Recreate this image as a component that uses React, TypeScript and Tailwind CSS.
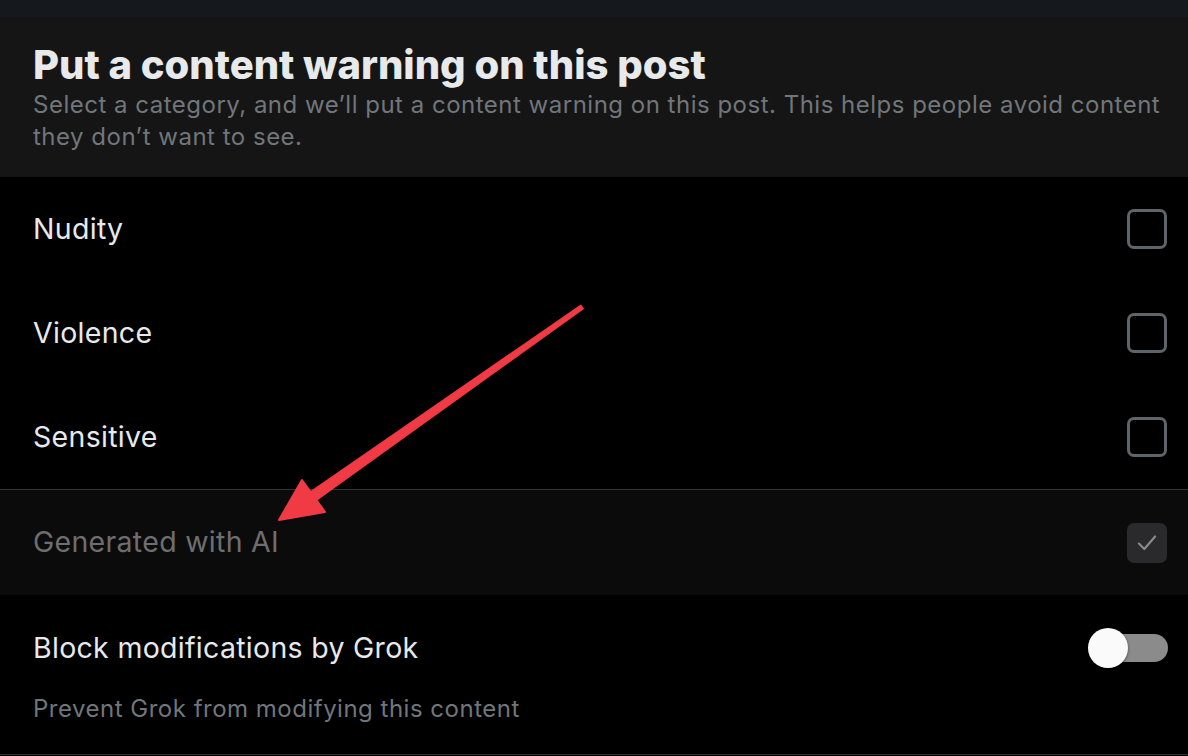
import React, { useState } from "react";

type Category = {
  label: string;
  checked: boolean;
};

const categories: Category[] = [
  { label: "Nudity", checked: false },
  { label: "Violence", checked: false },
  { label: "Sensitive", checked: false },
];

function Checkbox({ checked, disabled }: { checked: boolean; disabled?: boolean }) {
  if (disabled) {
    return (
      <div className="w-[40px] h-[40px] rounded-[7px] bg-[#2a2a2c] flex items-center justify-center">
        <svg width="26" height="26" viewBox="0 0 24 24" fill="none">
          <path d="M4.5 12.5l5 5L19.5 6" stroke="#8a8a8c" strokeWidth="2" strokeLinecap="round" strokeLinejoin="round" />
        </svg>
      </div>
    );
  }
  return (
    <div
      className={
        checked
          ? "w-[40px] h-[40px] rounded-[7px] bg-[#1d9bf0]"
          : "w-[40px] h-[40px] rounded-[7px] border-[3px] border-[#5f6468]"
      }
    />
  );
}

function Toggle({ on, onChange }: { on: boolean; onChange: () => void }) {
  return (
    <button onClick={onChange} className="relative w-[80px] h-[40px] flex items-center">
      <div className="absolute right-0 w-[70px] h-[28px] rounded-full bg-[#8b8b8b]" />
      <div
        className={
          on
            ? "absolute right-0 w-[40px] h-[40px] rounded-full bg-[#fafafa] shadow-[0_1px_3px_rgba(0,0,0,0.5)]"
            : "absolute left-0 w-[40px] h-[40px] rounded-full bg-[#fafafa] shadow-[0_1px_3px_rgba(0,0,0,0.5)]"
        }
      />
    </button>
  );
}

export default function App() {
  const [blockGrok, setBlockGrok] = useState(false);

  return (
    <div className="relative w-[1188px] h-[756px] overflow-hidden bg-black font-['Inter','Noto_Sans',sans-serif] text-[#e7e9ea]">
      <div className="h-[17px] bg-[#15181d]" />

      <div className="h-[160px] bg-[#151515] pl-[33px] pr-[20px] pt-[24px]">
        <h1 className="text-[40px] leading-[48px] font-extrabold text-[#e7e9ea]">
          Put a content warning on this post
        </h1>
        <p className="text-[24px] leading-[32px] tracking-[0.5px] text-[#71767b]">
          Select a category, and we’ll put a content warning on this post. This helps people avoid content
          they don’t want to see.
        </p>
      </div>

      {categories.map((c) => (
        <div key={c.label} className="h-[104px] flex items-center justify-between pl-[33px] pr-[21px]">
          <span className="text-[28.5px] tracking-[0.3px] text-[#e7e9ea]">{c.label}</span>
          <Checkbox checked={c.checked} />
        </div>
      ))}

      <div className="h-[106px] border-t border-[#2f3336] bg-[#0b0b0b] flex items-center justify-between pl-[33px] pr-[21px]">
        <span className="text-[28.5px] tracking-[0.3px] text-[#6e6e70]">Generated with AI</span>
        <Checkbox checked disabled />
      </div>

      <div className="h-[160px] border-b border-[#2f3336] pl-[33px] pr-[20px] pt-[32px]">
        <div className="flex items-center justify-between">
          <span className="text-[28.5px] tracking-[0.3px] text-[#e7e9ea]">Block modifications by Grok</span>
          <Toggle on={blockGrok} onChange={() => setBlockGrok(!blockGrok)} />
        </div>
        <p className="mt-[21px] text-[24px] tracking-[0.5px] text-[#71767b]">Prevent Grok from modifying this content</p>
      </div>

      {/* red callout arrow */}
      <svg className="absolute left-0 top-0 pointer-events-none" width="1188" height="756">
        <polygon
          points="583.2,308.6 580.8,305.4 310.6,491.9 316.4,500.1"
          fill="#f03a44"
          stroke="#f03a44"
          strokeWidth="1.5"
          strokeLinejoin="round"
        />
        <polygon
          points="302,480 279,520 325,512"
          fill="#f03a44"
          stroke="#f03a44"
          strokeWidth="2"
          strokeLinejoin="round"
        />
      </svg>
    </div>
  );
}
